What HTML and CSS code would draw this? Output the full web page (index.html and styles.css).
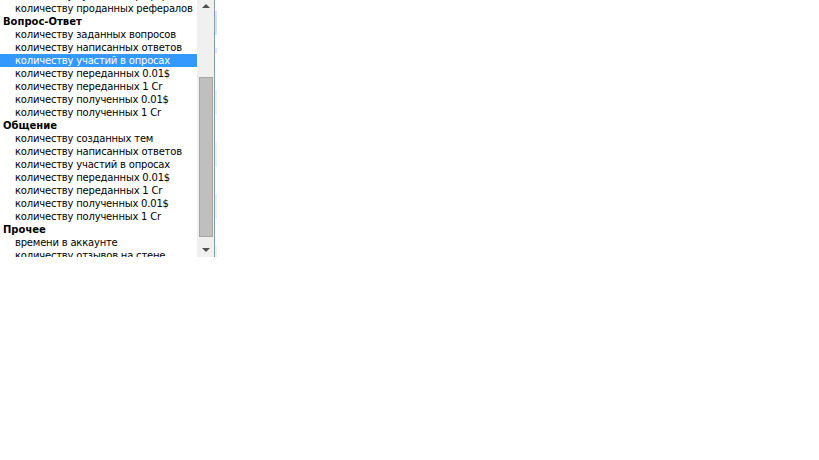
FILE: index.html
```html
<!DOCTYPE html>
<html lang="ru">
<head>
<meta charset="utf-8">
<title>Список</title>
<link rel="stylesheet" href="styles.css">
</head>
<body>
<div class="dropdown">
  <div class="list">
    <div class="opt">количеству купленных рефералов</div>
    <div class="opt">количеству проданных рефералов</div>
    <div class="group">Вопрос-Ответ</div>
    <div class="opt">количеству заданных вопросов</div>
    <div class="opt">количеству написанных ответов</div>
    <div class="opt selected">количеству участий в опросах</div>
    <div class="opt">количеству переданных 0.01$</div>
    <div class="opt">количеству переданных 1 Cr</div>
    <div class="opt">количеству полученных 0.01$</div>
    <div class="opt">количеству полученных 1 Cr</div>
    <div class="group">Общение</div>
    <div class="opt">количеству созданных тем</div>
    <div class="opt">количеству написанных ответов</div>
    <div class="opt">количеству участий в опросах</div>
    <div class="opt">количеству переданных 0.01$</div>
    <div class="opt">количеству переданных 1 Cr</div>
    <div class="opt">количеству полученных 0.01$</div>
    <div class="opt">количеству полученных 1 Cr</div>
    <div class="group">Прочее</div>
    <div class="opt">времени в аккаунте</div>
    <div class="opt">количеству отзывов на стене</div>
  </div>
  <div class="scrollbar">
    <div class="arrow up"></div>
    <div class="track"><div class="thumb"></div></div>
    <div class="arrow down"></div>
  </div>
  <div class="edge"></div>
</div>
</body>
</html>
```

FILE: styles.css
```css
html, body {
  margin: 0;
  padding: 0;
  background: #ffffff;
}

.dropdown {
  display: flex;
  width: 217px;
  height: 257px;
  overflow: hidden;
  font-family: "DejaVu Sans", sans-serif;
  font-size: 10px;
  letter-spacing: -0.2px;
  color: #000000;
}

.list {
  width: 197px;
  margin-top: -11px;
  background: #ffffff;
}

.opt,
.group {
  height: 13px;
  line-height: 13px;
  white-space: nowrap;
}

.opt {
  padding-left: 15px;
}

.group {
  padding-left: 3px;
  font-weight: bold;
  letter-spacing: 0;
}

.selected {
  background: #3399ff;
  color: #ffffff;
}

.scrollbar {
  width: 17px;
  background: #f0f0f0;
  display: flex;
  flex-direction: column;
  border-right: 1px solid #7f9db9;
}

.arrow {
  height: 17px;
  display: flex;
  align-items: center;
  justify-content: center;
}

.arrow::before {
  content: "";
  width: 0;
  height: 0;
  border-left: 4px solid transparent;
  border-right: 4px solid transparent;
}

.arrow.up::before {
  border-bottom: 4px solid #505050;
  margin-top: -6px;
}

.arrow.down::before {
  border-top: 4px solid #505050;
  margin-top: 3px;
}

.track {
  flex: 1;
  padding: 60px 1px 3px 2px;
  display: flex;
}

.thumb {
  flex: 1;
  height: 160px;
  background: #bfbfbf;
  border: 1px solid #a6a6a6;
  box-sizing: border-box;
}

.edge {
  width: 2px;
  background: linear-gradient(to bottom,
    transparent 0, transparent 11px,
    #cfe6f8 11px, #cfe6f8 35px,
    transparent 35px, transparent 48px,
    #d8ecf8 48px, #d8ecf8 53px,
    transparent 53px, transparent 90px,
    #f5efdf 90px, #f5efdf 115px,
    transparent 115px, transparent 142px,
    #f5efdf 142px, #f5efdf 167px,
    transparent 167px, transparent 194px,
    #f5efdf 194px, #f5efdf 219px,
    transparent 219px, transparent 246px,
    #f5efdf 246px, #f5efdf 257px);
}
```
